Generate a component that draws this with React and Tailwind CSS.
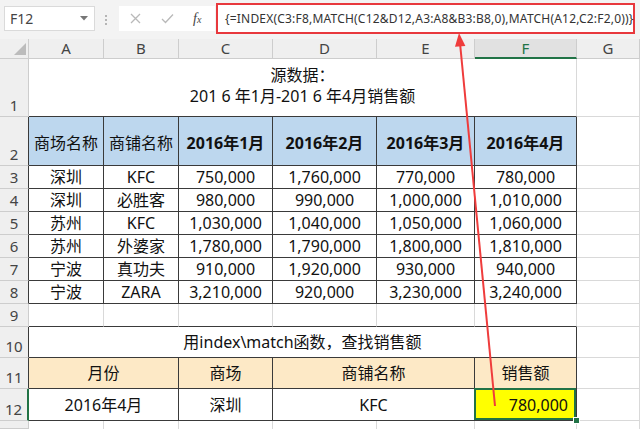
import React from 'react';

const LIGHT = 'border-r border-b border-[#d9d9d9]';
const DARK = 'border-r border-b border-[#3a3a3a]';
const HDR = 'bg-[#efefef] border-r border-b border-[#cdcdcd] text-[#444] text-[15px] leading-none';

const COLS = ['A', 'B', 'C', 'D', 'E', 'F', 'G'];

const DATA = [
  ['深圳', 'KFC', '750,000', '1,760,000', '770,000', '780,000'],
  ['深圳', '必胜客', '980,000', '990,000', '1,000,000', '1,010,000'],
  ['苏州', 'KFC', '1,030,000', '1,040,000', '1,050,000', '1,060,000'],
  ['苏州', '外婆家', '1,780,000', '1,790,000', '1,800,000', '1,810,000'],
  ['宁波', '真功夫', '910,000', '1,920,000', '930,000', '940,000'],
  ['宁波', 'ZARA', '3,210,000', '920,000', '3,230,000', '3,240,000'],
];

function Cell({ className = '', children }) {
  return <div className={`flex items-center justify-center whitespace-nowrap ${className}`}>{children}</div>;
}

function RowNum({ n, className = 'border-r-[#3a3a3a]' }) {
  return <div className={`${HDR} ${className} flex items-end justify-center pb-[3px]`}>{n}</div>;
}

function Toolbar() {
  return (
    <div className="flex h-[39px] items-start bg-[#f3f3f3] pt-[6px]">
      <div className="ml-[4px] flex h-[25px] w-[91px] items-center justify-between border border-[#dadada] bg-white pl-[5px] pr-[6px]">
        <span className="text-[14px] text-[#444]">F12</span>
        <svg width="8" height="5" viewBox="0 0 8 5"><polygon points="0,0 8,0 4,4.5" fill="#777" /></svg>
      </div>
      <div className="ml-[10px] mt-[9px] flex flex-col gap-[2px]">
        <span className="h-[2px] w-[2px] bg-[#b5b5b5]" />
        <span className="h-[2px] w-[2px] bg-[#b5b5b5]" />
        <span className="h-[2px] w-[2px] bg-[#b5b5b5]" />
      </div>
      <div className="ml-[12px] flex h-[25px] w-[96px] items-center bg-white">
        <svg className="ml-[11px]" width="11" height="11" viewBox="0 0 11 11">
          <path d="M1 1 L10 10 M10 1 L1 10" stroke="#b9b9b9" strokeWidth="1.3" />
        </svg>
        <svg className="ml-[20px]" width="13" height="11" viewBox="0 0 13 11">
          <path d="M1 6 L4.5 9.5 L12 1.5" stroke="#b9b9b9" strokeWidth="1.3" fill="none" />
        </svg>
        <span className="ml-[19px] italic text-[14px] text-[#444] [font-family:'Liberation_Serif',serif]">
          f<span className="text-[10px]">x</span>
        </span>
      </div>
      <div className="-mt-[3px] ml-[1px] flex h-[31px] w-[419px] items-center border-2 border-[#e8383d] bg-white pl-[7px] text-[12px] tracking-[0.2px] text-[#333]">
        {'{=INDEX(C3:F8,MATCH(C12&D12,A3:A8&B3:B8,0),MATCH(A12,C2:F2,0))}'}
      </div>
    </div>
  );
}

function Arrow() {
  return (
    <svg className="pointer-events-none absolute left-0 top-0" width="640" height="429" viewBox="0 0 640 429">
      <line x1="460.2" y1="45" x2="495" y2="406" stroke="#ef3c3c" strokeWidth="2" />
      <polygon points="459,33 465.4,46 455,46.8" fill="#ef3c3c" />
    </svg>
  );
}

export default function App() {
  return (
    <div className="relative h-[429px] w-[640px] overflow-hidden bg-white text-[16px] text-[#111] [font-family:'Noto_Sans','Noto_Sans_CJK_SC',sans-serif]">
      <Toolbar />

      <div className="grid grid-cols-[29px_75px_75px_94px_104px_98px_102px_1fr] grid-rows-[20px_58px_49px_23px_23px_23px_23px_23px_23px_23px_31px_31px_32px_8px]">
        {/* column headers */}
        <div className={`${HDR} relative`}>
          <svg className="absolute left-0 top-0" width="29" height="20" viewBox="0 0 29 20">
            <polygon points="26,4 26,16 14,16" fill="#bcbcbc" />
          </svg>
        </div>
        {COLS.map((c) =>
          c === 'F' ? (
            <Cell key={c} className="border-r border-b-2 border-r-[#cdcdcd] border-b-[#217346] bg-[#e1e1e1] text-[15px] text-[#217346]">{c}</Cell>
          ) : (
            <Cell key={c} className={`${HDR}`}>{c}</Cell>
          )
        )}

        {/* row 1 */}
        <RowNum n="1" className="" />
        <div className="col-span-6 flex flex-col items-center justify-end border-r border-b border-r-[#d9d9d9] border-b-[#3a3a3a] pb-[9px] leading-[21px]">
          <span>源数据：</span>
          <span>201 6 年1月-201 6 年4月销售额</span>
        </div>
        <div className={LIGHT} />

        {/* row 2 */}
        <RowNum n="2" />
        {['商场名称', '商铺名称'].map((t) => (
          <Cell key={t} className={`${DARK} bg-[#bdd7ee] pt-[3px]`}>{t}</Cell>
        ))}
        {['2016年1月', '2016年2月', '2016年3月', '2016年4月'].map((t) => (
          <Cell key={t} className={`${DARK} bg-[#bdd7ee] pt-[3px] font-bold`}>{t}</Cell>
        ))}
        <div className={LIGHT} />

        {/* rows 3-8 */}
        {DATA.map((row, i) => (
          <React.Fragment key={i}>
            <RowNum n={i + 3} />
            {row.map((v, j) => (
              <Cell key={j} className={DARK}>{v}</Cell>
            ))}
            <div className={LIGHT} />
          </React.Fragment>
        ))}

        {/* row 9 */}
        <RowNum n="9" className="" />
        {[0, 1, 2, 3, 4, 5].map((j) => (
          <div key={j} className="border-r border-b border-r-[#d9d9d9] border-b-[#3a3a3a]" />
        ))}
        <div className={LIGHT} />

        {/* row 10 */}
        <RowNum n="10" />
        <Cell className={`${DARK} col-span-6`}>用index\match函数，查找销售额</Cell>
        <div className={LIGHT} />

        {/* row 11 */}
        <RowNum n="11" />
        <Cell className={`${DARK} col-span-2 bg-[#fde9c6]`}>月份</Cell>
        <Cell className={`${DARK} bg-[#fde9c6]`}>商场</Cell>
        <Cell className={`${DARK} col-span-2 bg-[#fde9c6]`}>商铺名称</Cell>
        <Cell className={`${DARK} bg-[#fde9c6]`}>销售额</Cell>
        <div className={LIGHT} />

        {/* row 12 */}
        <RowNum n="12" className="border-r-2 border-r-[#217346] bg-[#d4d4d4] text-[#3d6b4c]" />
        <Cell className={`${DARK} col-span-2`}>2016年4月</Cell>
        <Cell className={DARK}>深圳</Cell>
        <Cell className={`${DARK} col-span-2`}>KFC</Cell>
        <Cell className={`${DARK} relative justify-end bg-[#ffff00] pr-[8px]`}>
          780,000
          <span className="absolute -left-px -top-px h-[calc(100%+1px)] w-[calc(100%+1px)] border-2 border-[#217346]" />
          <span className="absolute -bottom-[3px] -right-[3px] h-[5px] w-[5px] bg-[#217346] outline outline-1 outline-white" />
        </Cell>
        <div className={LIGHT} />

        {/* row 13 (cut off) */}
        <div className={HDR} />
        {[0, 1, 2, 3, 4, 5, 6].map((j) => (
          <div key={j} className="border-r border-[#d9d9d9]" />
        ))}
      </div>

      <Arrow />
    </div>
  );
}
